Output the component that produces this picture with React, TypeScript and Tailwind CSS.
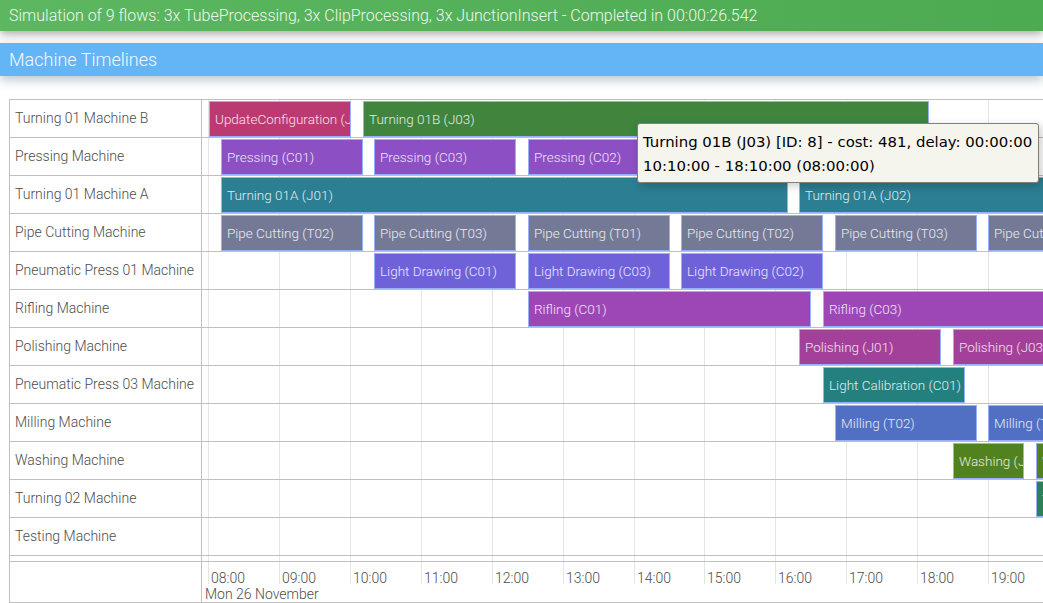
const HOUR = 70.95
// center column starts at page x 202; 08:00 grid line sits at page x 208.3
const cx = (h: number) => 6.3 + (h - 8) * HOUR
// items are laid out on a slightly different scale than the grid
const ix = (h: number) => 7 + (h - 8) * 70.85
const t = (s: string) => {
  const [hh, mm] = s.split(':').map(Number)
  return hh + mm / 60
}

interface Item { label: string; from: string; to: string; color: string }
interface Row { name: string; items: Item[] }

const rows: Row[] = [
  { name: 'Turning 01 Machine B', items: [
    { label: 'UpdateConfiguration (J01)', from: '08:00', to: '10:00', color: '#bb3a71' },
    { label: 'Turning 01B (J03)', from: '10:10', to: '18:10', color: '#40843e' },
  ] },
  { name: 'Pressing Machine', items: [
    { label: 'Pressing (C01)', from: '08:10', to: '10:10', color: '#8d4fc4' },
    { label: 'Pressing (C03)', from: '10:20', to: '12:20', color: '#8d4fc4' },
    { label: 'Pressing (C02)', from: '12:30', to: '14:30', color: '#8d4fc4' },
  ] },
  { name: 'Turning 01 Machine A', items: [
    { label: 'Turning 01A (J01)', from: '08:10', to: '16:10', color: '#2c7e92' },
    { label: 'Turning 01A (J02)', from: '16:20', to: '24:20', color: '#2c7e92' },
  ] },
  { name: 'Pipe Cutting Machine', items: [
    { label: 'Pipe Cutting (T02)', from: '08:10', to: '10:10', color: '#747a96' },
    { label: 'Pipe Cutting (T03)', from: '10:20', to: '12:20', color: '#747a96' },
    { label: 'Pipe Cutting (T01)', from: '12:30', to: '14:30', color: '#747a96' },
    { label: 'Pipe Cutting (T02)', from: '14:40', to: '16:40', color: '#747a96' },
    { label: 'Pipe Cutting (T03)', from: '16:50', to: '18:50', color: '#747a96' },
    { label: 'Pipe Cutting (T01)', from: '19:00', to: '21:00', color: '#747a96' },
  ] },
  { name: 'Pneumatic Press 01 Machine', items: [
    { label: 'Light Drawing (C01)', from: '10:20', to: '12:20', color: '#6f62d9' },
    { label: 'Light Drawing (C03)', from: '12:30', to: '14:30', color: '#6f62d9' },
    { label: 'Light Drawing (C02)', from: '14:40', to: '16:40', color: '#6f62d9' },
  ] },
  { name: 'Rifling Machine', items: [
    { label: 'Rifling (C01)', from: '12:30', to: '16:30', color: '#9d47b7' },
    { label: 'Rifling (C03)', from: '16:40', to: '20:40', color: '#9d47b7' },
  ] },
  { name: 'Polishing Machine', items: [
    { label: 'Polishing (J01)', from: '16:20', to: '18:20', color: '#a3419a' },
    { label: 'Polishing (J03)', from: '18:30', to: '20:30', color: '#a3419a' },
  ] },
  { name: 'Pneumatic Press 03 Machine', items: [
    { label: 'Light Calibration (C01)', from: '16:40', to: '18:40', color: '#23807e' },
  ] },
  { name: 'Milling Machine', items: [
    { label: 'Milling (T02)', from: '16:50', to: '18:50', color: '#5170c3' },
    { label: 'Milling (T03)', from: '19:00', to: '21:00', color: '#5170c3' },
  ] },
  { name: 'Washing Machine', items: [
    { label: 'Washing (J01)', from: '18:30', to: '19:30', color: '#52821f' },
    { label: 'Washing (J03)', from: '19:40', to: '20:40', color: '#52821f' },
  ] },
  { name: 'Turning 02 Machine', items: [
    { label: 'Turning 02 (J01)', from: '19:40', to: '21:40', color: '#2e8058' },
  ] },
  { name: 'Testing Machine', items: [] },
]

const hours = [8, 9, 10, 11, 12, 13, 14, 15, 16, 17, 18, 19, 20]

function GridLines() {
  return (
    <>
      {hours.map(h => (
        <div key={h} className="absolute top-0 bottom-0 w-px bg-[#e5e5e5]" style={{ left: Math.floor(cx(h)) }} />
      ))}
    </>
  )
}

export default function App() {
  return (
    <div className="w-[1043px] h-[603px] overflow-hidden bg-white font-['Roboto',sans-serif] font-light relative">
      {/* Summary bar */}
      <header className="h-[31px] flex items-center px-[9px] bg-gradient-to-r from-[#5cb760] to-[#4caa51] text-[#eef8ee] text-[16px] shadow-[0_3px_10px_rgba(0,0,0,0.35)] relative z-20">
        Simulation of 9 flows: 3x TubeProcessing, 3x ClipProcessing, 3x JunctionInsert - Completed in 00:00:26.542
      </header>

      <div className="mt-[12px] h-[33px] flex items-center px-[9px] bg-[#64b5f6] text-[#f3f9ff] text-[18px] shadow-[0_4px_10px_rgba(20,70,90,0.3)] relative z-10">
        Machine Timelines
      </div>

      {/* Timeline */}
      <div className="mt-[23px] ml-[9px] w-[1100px] border-l border-t border-[#bfbfbf] text-[#4d4d4d]">
        {rows.map(row => (
          <div key={row.name} className="flex h-[38px] border-b border-[#bfbfbf]">
            <div className="w-[192px] shrink-0 border-r border-[#bfbfbf] flex items-center pl-[5px] text-[14px] whitespace-nowrap">
              {row.name}
            </div>
            <div className="relative flex-1">
              <GridLines />
              {row.items.map((it, i) => {
                const l = Math.round(ix(t(it.from)))
                const r = Math.round(ix(t(it.to)))
                return (
                  <div
                    key={i}
                    className="absolute top-px h-[36px] border border-[#97b0f8] flex items-center pl-[5px] pt-px overflow-hidden whitespace-nowrap text-[13.5px] text-white/85"
                    style={{ left: l, width: r - l, backgroundColor: it.color }}
                  >
                    {it.label}
                  </div>
                )
              })}
            </div>
          </div>
        ))}

        {/* gap between items and axis */}
        <div className="flex h-[6px] border-b border-[#bfbfbf]">
          <div className="w-[192px] shrink-0 border-r border-[#bfbfbf]" />
          <div className="relative flex-1"><GridLines /></div>
        </div>

        {/* Time axis */}
        <div className="flex h-[41px] border-b border-[#bfbfbf]">
          <div className="w-[192px] shrink-0 border-r border-[#bfbfbf]" />
          <div className="relative flex-1 text-[14px]">
            {hours.map(h => (
              <div key={h} className="absolute top-0 h-[22px] border-l border-[#e5e5e5] pl-[2px] pt-[8px] leading-[16px]" style={{ left: Math.floor(cx(h)) }}>
                {String(h).padStart(2, '0')}:00
              </div>
            ))}
            <div className="absolute left-[3px] top-[24px] leading-[16px]">Mon 26 November</div>
          </div>
        </div>
      </div>

      {/* Tooltip */}
      <div className="absolute left-[637px] top-[123px] w-[402px] h-[60px] bg-[#f5f4ed] border border-[#808074] rounded-[3px] shadow-[3px_3px_10px_rgba(0,0,0,0.2)] px-[5px] py-[6px] font-['DejaVu_Sans',sans-serif] font-normal text-[14.9px] leading-[24px] text-black whitespace-nowrap z-30">
        <div>Turning 01B (J03) [ID: 8] - cost: 481, delay: 00:00:00</div>
        <div>10:10:00 - 18:10:00 (08:00:00)</div>
      </div>
    </div>
  )
}
